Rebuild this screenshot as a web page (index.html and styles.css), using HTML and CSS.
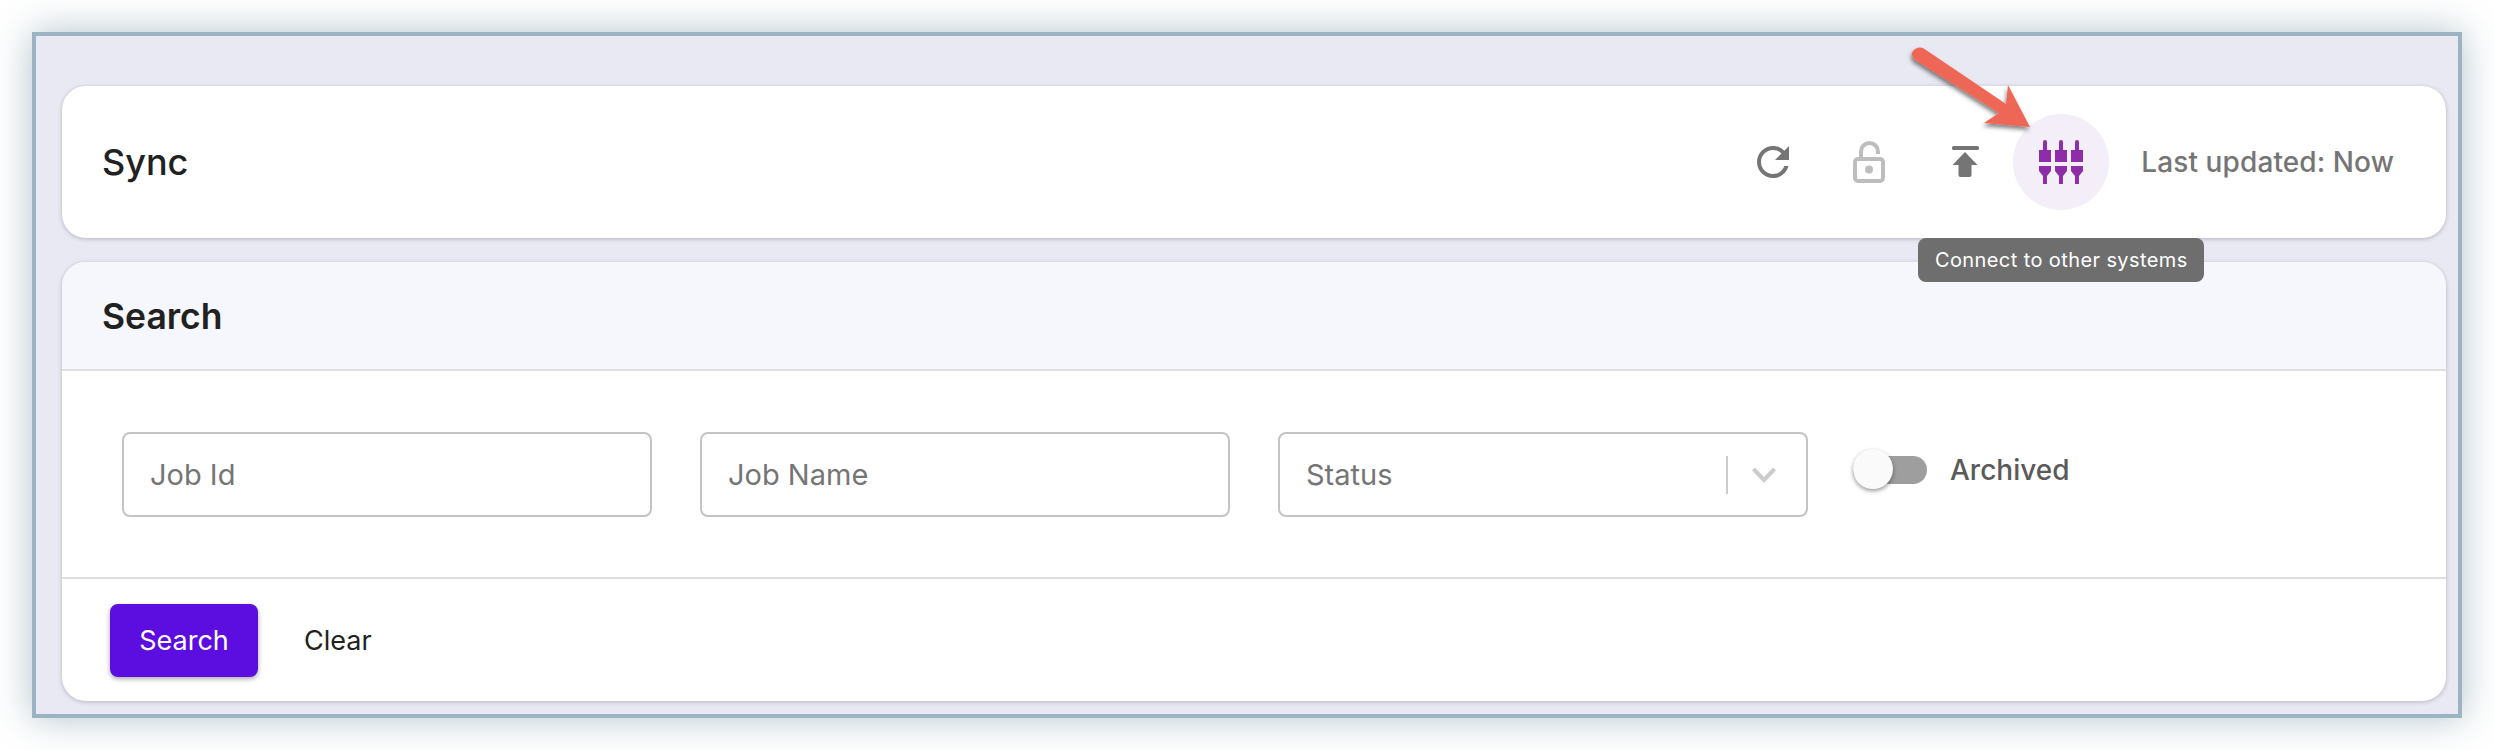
FILE: index.html
```html
<!DOCTYPE html>
<html lang="en">
<head>
<meta charset="utf-8">
<title>Sync</title>
<link rel="stylesheet" href="styles.css">
</head>
<body>
<main class="frame">
  <section class="card top-card">
    <h1 class="title">Sync</h1>
    <div class="actions">
      <button class="icon-btn" aria-label="Refresh">
        <svg width="48" height="48" viewBox="0 0 24 24"><path fill="#757575" d="M17.65 6.35C16.2 4.8 14.21 4 12 4c-4.42 0-7.99 3.58-7.99 8s3.57 8 7.99 8c3.73 0 6.84-2.55 7.73-6h-2.08c-.82 2.33-3.04 4-5.65 4-3.31 0-6-2.69-6-6s2.69-6 6-6c1.66 0 3.14.69 4.22 1.78L13 11h7V4l-2.35 2.35z"/></svg>
      </button>
      <button class="icon-btn" aria-label="Unlock">
        <svg width="36" height="42" viewBox="0 0 36 42"><path fill="none" stroke="#bdbdbd" stroke-width="4" d="M10 16V10.500a8.500 8.500 0 0 1 17 0V13"/><rect x="4" y="18" width="28" height="22" rx="3" fill="none" stroke="#bdbdbd" stroke-width="4"/><circle cx="18" cy="28.500" r="4" fill="#bdbdbd"/></svg>
      </button>
      <button class="icon-btn" aria-label="Upload">
        <svg width="36" height="32" viewBox="0 0 36 32"><rect x="5" y="0" width="27" height="4" rx="1.500" fill="#757575"/><path fill="#757575" d="M18 6 30.500 19H24.500V29a2 2 0 0 1-2 2H13.500a2 2 0 0 1-2-2V19H5.500Z"/></svg>
      </button>
      <div class="connect">
        <button class="icon-btn icon-btn-active" aria-label="Connect to other systems">
          <svg width="44" height="44" viewBox="0 0 44 44" fill="#8e2da8"><path d="M0 10H4V2a2 2 0 0 1 4 0V10H12V22H0ZM0 26H12V31L8 36V44H4V36L0 31Z"/><path d="M16 10H20V2a2 2 0 0 1 4 0V10H28V22H16ZM16 26H28V31L24 36V44H20V36L16 31Z"/><path d="M32 10H36V2a2 2 0 0 1 4 0V10H44V22H32ZM32 26H44V31L40 36V44H36V36L32 31Z"/></svg>
        </button>
        <div class="tooltip">Connect to other systems</div>
      </div>
      <span class="updated">Last updated: Now</span>
    </div>
  </section>

  <section class="card search-card">
    <header class="search-head"><h2 class="title">Search</h2></header>
    <div class="search-body">
      <div class="field"><span class="placeholder">Job Id</span></div>
      <div class="field"><span class="placeholder">Job Name</span></div>
      <div class="field field-select">
        <span class="placeholder">Status</span>
        <span class="sep"></span>
        <svg class="chev" width="24" height="16" viewBox="0 0 24 16"><path d="M1.500 2 12 13 22.500 2" fill="none" stroke="#cccccc" stroke-width="4"/></svg>
      </div>
      <div class="toggle-wrap">
        <span class="track"><span class="thumb"></span></span>
        <span class="toggle-label">Archived</span>
      </div>
    </div>
    <footer class="search-foot">
      <button class="btn-primary">Search</button>
      <button class="btn-text">Clear</button>
    </footer>
  </section>

  <svg class="arrow" width="140" height="100" viewBox="0 0 140 100">
    <defs><filter id="as" x="-20%" y="-20%" width="140%" height="140%"><feDropShadow dx="-1" dy="3" stdDeviation="2" flood-color="#000" flood-opacity=".5"/></filter></defs>
    <path filter="url(#as)" fill="#ee6655" d="M19 8 102 64 104 45 126 87 80 83 95 73 11 20Q6 15 9 11 13 6 19 8Z"/>
  </svg>
</main>
</body>
</html>
```

FILE: styles.css
```css
* { box-sizing: border-box; }
html, body { margin: 0; padding: 0; background: #fff; }
body {
  font-family: Inter, "Liberation Sans", sans-serif;
  color: #212121;
  height: 750px;
  overflow: hidden;
  padding: 32px;
}
.frame {
  position: relative;
  width: 2430px;
  height: 686px;
  border: 4px solid #9cb3c1;
  background: #e9e9f3;
  padding: 50px 12px 13px 26px;
  display: flex;
  flex-direction: column;
  gap: 24px;
  box-shadow: 0 0 36px rgba(70, 110, 130, .42);
}
.card {
  background: #fff;
  border-radius: 24px;
  box-shadow: 0 1px 4px rgba(60, 60, 90, .3);
}
.top-card {
  height: 152px;
  display: flex;
  align-items: center;
  justify-content: space-between;
  padding: 0 52px 0 40px;
}
.title {
  margin: 0;
  font-size: 36px;
  font-weight: 500;
  line-height: 44px;
  color: #212121;
}
.search-head .title { font-size: 35.500px; font-weight: 600; }
.actions { display: flex; align-items: center; }
.icon-btn {
  width: 96px;
  height: 96px;
  padding: 0;
  border: 0;
  border-radius: 50%;
  background: transparent;
  display: flex;
  align-items: center;
  justify-content: center;
}
.icon-btn-active { background: #f4eef8; }
.connect { position: relative; }
.tooltip {
  position: absolute;
  top: 124px;
  left: 50%;
  transform: translateX(-50%);
  width: 286px;
  height: 44px;
  border-radius: 8px;
  background: #6e6e6e;
  color: #fff;
  font-size: 20px;
  line-height: 44px;
  text-align: center;
  letter-spacing: .4px;
  white-space: nowrap;
}
.updated {
  margin-left: 32px;
  font-size: 28px;
  font-weight: 500;
  color: #757575;
  letter-spacing: .1px;
}
.search-card {
  flex: 1;
  display: flex;
  flex-direction: column;
  overflow: hidden;
}
.search-head {
  height: 109px;
  background: #f6f7fd;
  border-bottom: 2px solid #dedede;
  display: flex;
  align-items: center;
  padding: 2px 0 0 40px;
}
.search-body {
  height: 208px;
  border-bottom: 2px solid #dedede;
  display: flex;
  align-items: flex-start;
  padding: 61px 0 0 60px;
  gap: 48px;
}
.field {
  width: 530px;
  height: 85px;
  border: 2px solid #c4c4c4;
  border-radius: 8px;
  display: flex;
  align-items: center;
  padding: 0 26px;
}
.placeholder { font-size: 29px; color: #757575; }
.field-select { padding-right: 30px; }
.field-select .placeholder { flex: 1; }
.sep { width: 2px; height: 38px; background: #cccccc; margin-right: 24px; }
.toggle-wrap { display: flex; align-items: center; margin-left: -3px; padding-top: 21px; }
.track {
  position: relative;
  display: block;
  width: 74px;
  height: 28px;
  border-radius: 14px;
  background: #9e9e9e;
}
.thumb {
  position: absolute;
  left: 0;
  top: -7px;
  width: 40px;
  height: 40px;
  border-radius: 50%;
  background: #fafafa;
  box-shadow: 0 2px 4px rgba(0, 0, 0, .4);
}
.toggle-label { margin-left: 23px; font-size: 28px; font-weight: 500; color: #5a5a5a; }
.search-foot {
  flex: 1;
  display: flex;
  align-items: center;
  padding: 0 0 0 48px;
  gap: 46px;
}
.btn-primary, .btn-text {
  font-family: inherit;
  font-size: 27px;
  border: 0;
  padding: 0;
}
.btn-primary {
  width: 148px;
  height: 73px;
  border-radius: 8px;
  background: #5c0de0;
  color: #fff;
  box-shadow: 0 2px 5px rgba(0, 0, 0, .35);
}
.btn-text { background: transparent; color: #212121; }
.arrow { position: absolute; left: 1868px; top: 4px; }
```
